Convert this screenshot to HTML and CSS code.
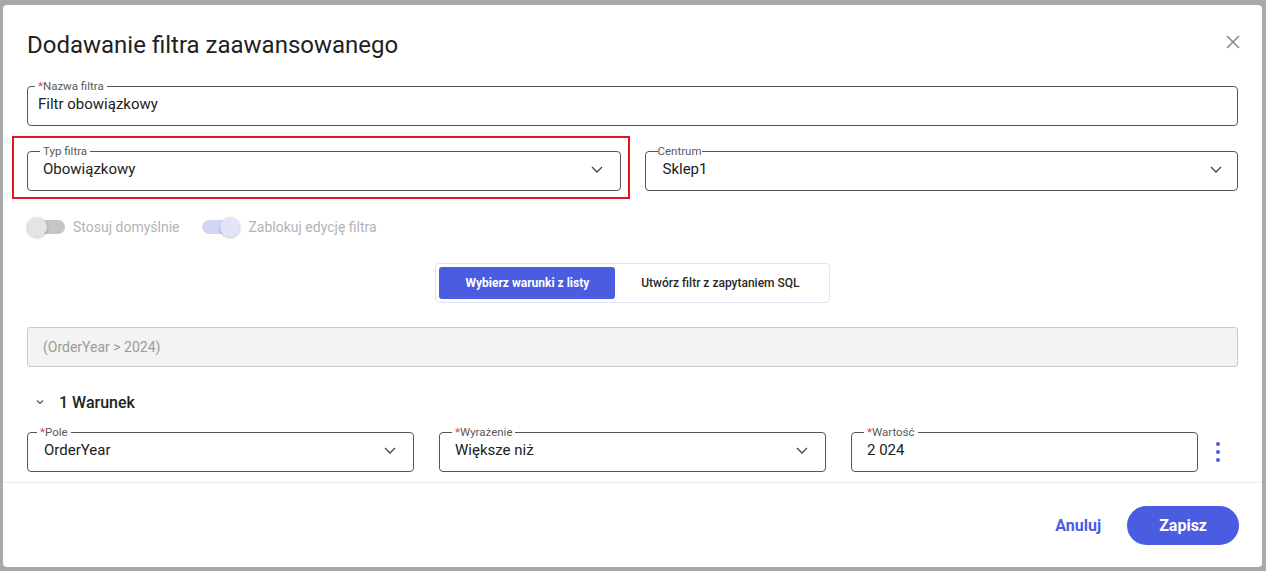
FILE: index.html
```html
<!DOCTYPE html>
<html lang="pl">
<head>
    <meta charset="UTF-8">
    <meta name="viewport" content="width=device-width, initial-scale=1.0">
    <title>Dodawanie filtra zaawansowanego</title>
    <link rel="stylesheet" href="styles.css">
</head>
<body>
    <div class="dialog">
        <div class="dialog-body">
            <div class="dialog-head">
                <h1 class="dialog-title">Dodawanie filtra zaawansowanego</h1>
                <button class="close-btn" aria-label="Zamknij">
                    <svg width="14" height="14" viewBox="0 0 14 14"><path d="M1 1 L13 13 M13 1 L1 13" stroke="#8a8a8a" stroke-width="1.6" fill="none"/></svg>
                </button>
            </div>

            <fieldset class="field field-name">
                <legend><span class="req">*</span>Nazwa filtra</legend>
                <div class="field-value">Filtr obowiązkowy</div>
            </fieldset>

            <div class="field-row">
                <div class="highlight">
                    <fieldset class="field">
                        <legend>Typ filtra</legend>
                        <div class="field-value">
                            <span>Obowiązkowy</span>
                            <svg class="chevron" width="12" height="7" viewBox="0 0 12 7"><path d="M1 1 L6 6 L11 1" stroke="#444" stroke-width="1.3" fill="none"/></svg>
                        </div>
                    </fieldset>
                </div>
                <fieldset class="field field-flat">
                    <legend>Centrum</legend>
                    <div class="field-value">
                        <span>Sklep1</span>
                        <svg class="chevron" width="12" height="7" viewBox="0 0 12 7"><path d="M1 1 L6 6 L11 1" stroke="#444" stroke-width="1.3" fill="none"/></svg>
                    </div>
                </fieldset>
            </div>

            <div class="toggles">
                <label class="toggle">
                    <span class="switch"><span class="thumb"></span></span>
                    Stosuj domyślnie
                </label>
                <label class="toggle">
                    <span class="switch on"><span class="thumb"></span></span>
                    Zablokuj edycję filtra
                </label>
            </div>

            <div class="segmented">
                <button class="seg-btn active">Wybierz warunki z listy</button>
                <button class="seg-btn">Utwórz filtr z zapytaniem SQL</button>
            </div>

            <div class="sql-preview">(OrderYear &gt; 2024)</div>

            <div class="group-head">
                <svg class="group-chevron" width="12" height="12" viewBox="0 0 12 12"><path d="M3 4.5 L6 7.5 L9 4.5" stroke="#555" stroke-width="1.2" fill="none"/></svg>
                <span>1 Warunek</span>
            </div>

            <div class="condition-row">
                <fieldset class="field field-pole">
                    <legend><span class="req">*</span>Pole</legend>
                    <div class="field-value">
                        <span>OrderYear</span>
                        <svg class="chevron" width="12" height="7" viewBox="0 0 12 7"><path d="M1 1 L6 6 L11 1" stroke="#444" stroke-width="1.3" fill="none"/></svg>
                    </div>
                </fieldset>
                <fieldset class="field">
                    <legend><span class="req">*</span>Wyrażenie</legend>
                    <div class="field-value">
                        <span>Większe niż</span>
                        <svg class="chevron" width="12" height="7" viewBox="0 0 12 7"><path d="M1 1 L6 6 L11 1" stroke="#444" stroke-width="1.3" fill="none"/></svg>
                    </div>
                </fieldset>
                <div class="value-cell">
                    <fieldset class="field">
                        <legend><span class="req">*</span>Wartość</legend>
                        <div class="field-value">2 024</div>
                    </fieldset>
                    <button class="kebab" aria-label="Więcej">
                        <span class="dot"></span><span class="dot"></span><span class="dot"></span>
                    </button>
                </div>
            </div>
        </div>

        <div class="dialog-footer">
            <button class="btn-text">Anuluj</button>
            <button class="btn-primary">Zapisz</button>
        </div>
    </div>
</body>
</html>
```

FILE: styles.css
```css
body {
    margin: 0;
    height: 571px;
    box-sizing: border-box;
    padding: 5px 4px 4px 3px;
    background-color: #a9a9a9;
    font-family: Roboto, "Noto Sans", sans-serif;
    color: #212121;
}

button {
    font-family: inherit;
    border: none;
    background: none;
    cursor: pointer;
    padding: 0;
}

.dialog {
    height: 100%;
    background-color: #ffffff;
    border-radius: 4px;
    display: flex;
    flex-direction: column;
}

.dialog-body {
    flex: 1;
    overflow: hidden;
    padding: 24px 24px 0 24px;
}

/* header */
.dialog-head {
    display: flex;
    justify-content: space-between;
    align-items: flex-start;
}
.dialog-title {
    margin: 0;
    font-size: 24px;
    line-height: 32px;
    font-weight: 400;
    color: #222222;
}
.close-btn {
    margin-top: 6px;
    margin-right: -2px;
    width: 14px;
    height: 14px;
    display: flex;
}

/* outlined fields */
.field {
    margin: 0;
    padding: 0 12px;
    border: 1px solid #555555;
    border-radius: 4px;
    min-width: 0;
}
.field legend {
    padding: 0 3px;
    font-size: 11.5px;
    line-height: 12px;
    color: #5a5a5a;
}
.req {
    color: #e53950;
}
.field-value {
    display: flex;
    justify-content: space-between;
    align-items: center;
    padding: 2px 3px 11px 3px;
    font-size: 15px;
    line-height: 20px;
    color: #212121;
}
.chevron {
    margin-right: 2px;
}

.field-name {
    margin-top: 19px;
    padding-left: 7px;
}
.field-flat legend {
    padding: 0;
}
.field-flat .field-value {
    padding-left: 5px;
    padding-right: 1px;
}
.field-pole {
    padding-left: 9px;
}
.field-pole .field-value {
    padding-left: 7px;
}

.field-row {
    margin-top: 19px;
    display: grid;
    grid-template-columns: 1fr 1fr;
    gap: 24px;
}

/* red annotation frame around "Typ filtra" */
.highlight {
    position: relative;
}
.highlight::after {
    content: "";
    position: absolute;
    top: -9px;
    left: -15px;
    right: -9px;
    bottom: -8px;
    border: 2px solid #e3161f;
    pointer-events: none;
}

/* toggles */
.toggles {
    margin-top: 26px;
    display: flex;
    gap: 23px;
}
.toggle {
    display: flex;
    align-items: center;
    gap: 8px;
    font-size: 14px;
    line-height: 20px;
    color: #b3b3b3;
}
.switch {
    width: 38px;
    height: 14px;
    border-radius: 7px;
    background-color: #c6c6c6;
    display: flex;
    align-items: center;
}
.thumb {
    width: 20px;
    height: 20px;
    border-radius: 50%;
    background-color: #e4e4e4;
    box-shadow: 0 1px 3px rgba(0, 0, 0, 0.25);
}
.switch.on {
    background-color: #d2d6f6;
    justify-content: flex-end;
}
.switch.on .thumb {
    background-color: #e2e4f9;
}

/* segmented control */
.segmented {
    margin: 26px auto 0 auto;
    width: fit-content;
    display: flex;
    padding: 3px;
    border: 1px solid #e2e2f5;
    border-radius: 4px;
}
.seg-btn {
    height: 32px;
    padding: 0 26px;
    font-size: 12px;
    font-weight: 500;
    color: #2a2a2a;
    border-radius: 3px;
}
.seg-btn.active {
    background-color: #4a5de1;
    color: #ffffff;
    font-weight: 700;
}

.sql-preview {
    margin-top: 24px;
    height: 38px;
    box-sizing: content-box;
    display: flex;
    align-items: center;
    padding: 0 15px;
    background-color: #f3f3f3;
    border: 1px solid #c9c9c9;
    border-radius: 3px;
    font-size: 14px;
    color: #9c9c9c;
}

.group-head {
    margin-top: 23px;
    display: flex;
    align-items: center;
    height: 24px;
    font-size: 16px;
    font-weight: 500;
    color: #222222;
}
.group-chevron {
    margin-left: 7px;
    margin-right: 13px;
}

.condition-row {
    margin-top: 12px;
    display: grid;
    grid-template-columns: 1fr 1fr 1fr;
    gap: 25px;
}
.value-cell {
    display: flex;
}
.value-cell .field {
    flex: 1;
}
.kebab {
    width: 40px;
    padding-top: 6px;
    display: flex;
    flex-direction: column;
    align-items: center;
    justify-content: center;
    gap: 4px;
}
.dot {
    width: 4px;
    height: 4px;
    border-radius: 50%;
    background-color: #4a5de1;
}

/* footer */
.dialog-footer {
    height: 84px;
    border-top: 1px solid #ececec;
    display: flex;
    justify-content: flex-end;
    align-items: center;
    gap: 26px;
    padding-right: 23px;
}
.btn-text {
    font-size: 16px;
    font-weight: 700;
    color: #4a5de1;
}
.btn-primary {
    height: 39px;
    padding: 0 32px;
    border-radius: 20px;
    background-color: #4a5de1;
    color: #ffffff;
    font-size: 16px;
    font-weight: 700;
}
```
